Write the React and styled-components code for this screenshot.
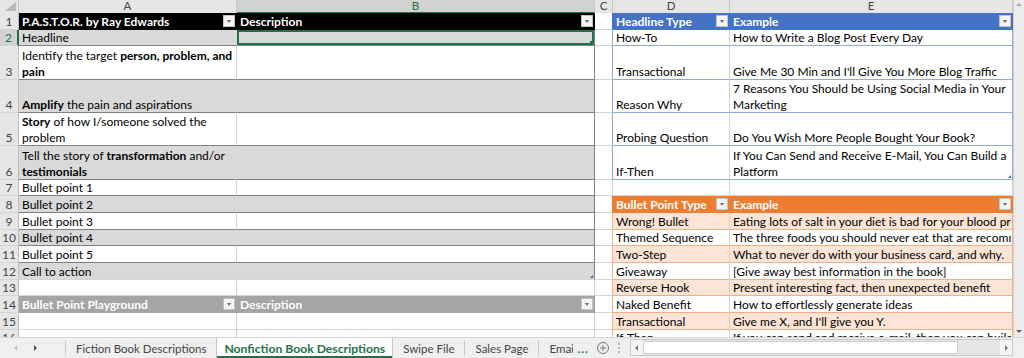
import React from 'react';
import styled, { createGlobalStyle } from 'styled-components';

const GlobalStyle = createGlobalStyle`
  html, body { margin: 0; padding: 0; background: #fff; }
  body { font-family: Lato, "Liberation Sans", sans-serif; }
`;

const COLS = '19px 218px 358px 18px 117px 283px';
const S = 16.67;
const D = 33.33;

const kinds = {
  plain: { bg: '#fff' },
  blackHead: { bg: '#000', fg: '#fff', bold: true, rc: '#000', bc: '#000' },
  band: { bg: '#d9d9d9', rc: '#d9d9d9', bc: '#808080' },
  bandLast: { bg: '#d9d9d9', rc: '#d9d9d9', bc: '#d4d4d4' },
  white: { bg: '#fff', bc: '#808080' },
  grayHead: { bg: '#a5a5a5', fg: '#fff', bold: true, rc: '#a5a5a5', bc: '#a5a5a5' },
  blueHead: { bg: '#4472c4', fg: '#fff', bold: true, rc: '#4472c4', bc: '#4472c4' },
  blue: { bg: '#fff', bc: '#8eaadb' },
  orangeHead: { bg: '#ed7d31', fg: '#fff', bold: true, rc: '#ed7d31', bc: '#ed7d31' },
  orange: { bg: '#fce4d6', rc: '#f8cbad', bc: '#f4b084' },
  orangeW: { bg: '#fff', bc: '#f4b084' },
};

const Window = styled.div`
  width: 1024px;
  height: 358px;
  display: flex;
  flex-direction: column;
  overflow: hidden;
  background: #fff;
`;

const SheetArea = styled.div`
  display: flex;
  height: 337px;
  overflow: hidden;
  flex: none;
`;

const Grid = styled.div`
  width: 1013px;
  display: flex;
  flex-direction: column;
  overflow: hidden;
`;

const Row = styled.div`
  display: grid;
  grid-template-columns: ${COLS};
  height: ${(p) => p.$h}px;
  flex: none;
`;

const Corner = styled.div`
  background: #e6e6e6;
  border-right: 1px solid #c6c6c6;
  border-bottom: 1px solid #bdbdbd;
  display: flex;
  align-items: flex-end;
  justify-content: flex-end;
  padding: 0 2px 2px 0;
  & svg { display: block; }
`;

const ColHead = styled.div`
  box-sizing: border-box;
  background: ${(p) => (p.$active ? '#d2d2d2' : '#e6e6e6')};
  color: ${(p) => (p.$active ? '#217346' : '#444')};
  border-right: 1px solid #c6c6c6;
  border-bottom: ${(p) => (p.$active ? '2px solid #217346' : '1px solid #bdbdbd')};
  font-size: 11.5px;
  line-height: 12px;
  text-align: center;
`;

const RowNum = styled.div`
  box-sizing: border-box;
  background: ${(p) => (p.$active ? '#d2d2d2' : '#e6e6e6')};
  color: ${(p) => (p.$active ? '#217346' : '#444')};
  border-right: ${(p) => (p.$active ? '2px solid #217346' : '1px solid #bdbdbd')};
  border-bottom: 1px solid #d4d4d4;
  font-size: 12px;
  line-height: 16px;
  display: flex;
  align-items: flex-end;
  justify-content: center;
  & span { margin-bottom: -1px; }
`;

const Cell = styled.div`
  box-sizing: border-box;
  position: relative;
  display: flex;
  align-items: flex-end;
  min-width: 0;
  overflow: hidden;
  white-space: nowrap;
  padding: 0 1px 0 3px;
  font-size: 12px;
  line-height: 16px;
  background: ${(p) => kinds[p.$kind].bg};
  color: ${(p) => kinds[p.$kind].fg || '#000'};
  font-weight: ${(p) => (kinds[p.$kind].bold ? 700 : 400)};
  border-right: 1px solid ${(p) => p.$rc || kinds[p.$kind].rc || '#d4d4d4'};
  border-bottom: 1px solid ${(p) => kinds[p.$kind].bc || '#d4d4d4'};
  box-shadow: ${(p) => (p.$sel ? 'inset 0 0 0 2px #217346' : 'none')};
  & b { font-weight: 700; }
`;

const Label = styled.span`
  flex: 1;
  min-width: 0;
  overflow: hidden;
  margin-bottom: -1px;
`;

const FilterBtn = styled.span`
  flex: none;
  position: relative;
  box-sizing: border-box;
  width: 12px;
  height: 12px;
  margin: 0 0 2px 2px;
  background: #f4f4f4;
  border: 1px solid #c3c3c3;
  &::after {
    content: '';
    position: absolute;
    left: 3px;
    top: 4px;
    border-left: 2.5px solid transparent;
    border-right: 2.5px solid transparent;
    border-top: 3px solid #6a6a6a;
  }
`;

const SelHandle = styled.span`
  position: absolute;
  right: 0;
  bottom: 0;
  width: 4px;
  height: 4px;
  background: #217346;
`;

const ResizeHandle = styled.span`
  position: absolute;
  right: 1px;
  bottom: 1px;
  width: 0;
  height: 0;
  border-left: 3px solid transparent;
  border-bottom: 3px solid #3b5fb7;
`;

const VScroll = styled.div`
  width: 11px;
  flex: none;
  background: #ececec;
  border-left: 1px solid #d2d2d2;
  box-sizing: border-box;
  display: flex;
  flex-direction: column;
  justify-content: space-between;
  align-items: center;
  padding: 3px 0 4px;
`;

const Arrow = styled.span`
  width: 0;
  height: 0;
  ${(p) =>
    p.$dir === 'up' &&
    `border-left: 3px solid transparent; border-right: 3px solid transparent; border-bottom: 3px solid ${p.$c};`}
  ${(p) =>
    p.$dir === 'down' &&
    `border-left: 3px solid transparent; border-right: 3px solid transparent; border-top: 3px solid ${p.$c};`}
  ${(p) =>
    p.$dir === 'left' &&
    `border-top: 3px solid transparent; border-bottom: 3px solid transparent; border-right: 3px solid ${p.$c};`}
  ${(p) =>
    p.$dir === 'right' &&
    `border-top: 3px solid transparent; border-bottom: 3px solid transparent; border-left: 3px solid ${p.$c};`}
`;

const TabBar = styled.div`
  flex: none;
  height: 21px;
  display: flex;
  align-items: stretch;
  background: #efefef;
  border-top: 1px solid #d6d6d6;
  box-sizing: border-box;
  font-size: 11.5px;
  color: #444;
`;

const Nav = styled.div`
  width: 65px;
  flex: none;
  display: flex;
  align-items: center;
  gap: 17px;
  padding-left: 14px;
  box-sizing: border-box;
`;

const Sep = styled.span`
  flex: none;
  width: 1px;
  height: 14px;
  align-self: center;
  background: #c6c6c6;
`;

const Tab = styled.div`
  flex: none;
  display: flex;
  align-items: center;
  padding: 0 ${(p) => (p.$active ? 7 : 10)}px;
  white-space: nowrap;
  overflow: hidden;
  ${(p) => p.$w && `width: ${p.$w}px; padding-right: 0;`}
  background: ${(p) => (p.$active ? '#fff' : 'transparent')};
  color: ${(p) => (p.$active ? '#217346' : '#444')};
  font-weight: ${(p) => (p.$active ? 700 : 400)};
  font-size: ${(p) => (p.$active ? 12.2 : 11.5)}px;
  border-left: ${(p) => (p.$active ? '1px solid #c6c6c6' : 'none')};
  border-right: ${(p) => (p.$active ? '1px solid #c6c6c6' : 'none')};
  box-shadow: ${(p) => (p.$active ? 'inset 0 -2px 0 #217346' : 'none')};
`;

const More = styled.span`
  flex: none;
  align-self: center;
  color: #217346;
  font-weight: 700;
  letter-spacing: 1px;
  margin-left: 4px;
`;

const AddBtn = styled.span`
  flex: none;
  align-self: center;
  width: 12px;
  height: 12px;
  margin-left: 8px;
  border: 1px solid #777;
  border-radius: 50%;
  position: relative;
  box-sizing: border-box;
  &::before,
  &::after {
    content: '';
    position: absolute;
    background: #777;
    left: 50%;
    top: 50%;
    transform: translate(-50%, -50%);
  }
  &::before { width: 6px; height: 1px; }
  &::after { width: 1px; height: 6px; }
`;

const Dots = styled.span`
  flex: none;
  align-self: center;
  margin: 0 10px 0 9px;
  display: flex;
  flex-direction: column;
  gap: 2px;
  & i {
    display: block;
    width: 2px;
    height: 2px;
    background: #b5b5b5;
  }
`;

const HScroll = styled.div`
  flex: 1;
  margin: 1px 11px 2px 0;
  display: flex;
  align-items: stretch;
  background: #e6e6e6;
  border: 1px solid #c8c8c8;
`;

const HBtn = styled.span`
  width: 12px;
  flex: none;
  display: flex;
  align-items: center;
  justify-content: center;
  background: #f4f4f4;
`;

const Thumb = styled.span`
  width: 313px;
  margin: 1px 0;
  background: #fff;
  border: 1px solid #cfcfcf;
`;

const Track = styled.span`
  flex: 1;
`;

const leftRows = [
  { n: 1, h: S, k: 'blackHead', a: 'P.A.S.T.O.R. by Ray Edwards', b: 'Description', f: true },
  { n: 2, h: S, k: 'band', a: 'Headline', sel: true },
  { n: 3, h: D, k: 'white', a: <>Identify the target <b>person, problem, and</b><br /><b>pain</b></> },
  { n: 4, h: D, k: 'band', a: <><b>Amplify</b> the pain and aspirations</> },
  { n: 5, h: D, k: 'white', a: <><b>Story</b> of how I/someone solved the<br />problem</> },
  { n: 6, h: D, k: 'band', a: <>Tell the story of <b>transformation</b> and/or<br /><b>testimonials</b></> },
  { n: 7, h: S, k: 'white', a: 'Bullet point 1' },
  { n: 8, h: S, k: 'band', a: 'Bullet point 2' },
  { n: 9, h: S, k: 'white', a: 'Bullet point 3' },
  { n: 10, h: S, k: 'band', a: 'Bullet point 4' },
  { n: 11, h: S, k: 'white', a: 'Bullet point 5' },
  { n: 12, h: S, k: 'bandLast', a: 'Call to action', end: true },
  { n: 13, h: S, k: 'plain' },
  { n: 14, h: S, k: 'grayHead', a: 'Bullet Point Playground', b: 'Description', f: true },
  { n: 15, h: S, k: 'plain' },
  { n: 16, h: S, k: 'plain' },
];

const rightRows = [
  { k: 'blueHead', d: 'Headline Type', e: 'Example', f: true, edge: '#4472c4' },
  { k: 'blue', d: 'How-To', e: 'How to Write a Blog Post Every Day', edge: '#8eaadb' },
  { k: 'blue', d: 'Transactional', e: "Give Me 30 Min and I'll Give You More Blog Traffic", edge: '#8eaadb' },
  { k: 'blue', d: 'Reason Why', e: <>7 Reasons You Should be Using Social Media in Your<br />Marketing</>, edge: '#8eaadb' },
  { k: 'blue', d: 'Probing Question', e: 'Do You Wish More People Bought Your Book?', edge: '#8eaadb' },
  { k: 'blue', d: 'If-Then', e: <>If You Can Send and Receive E-Mail, You Can Build a<br />Platform</>, edge: '#8eaadb', end: true },
  { k: 'plain' },
  { k: 'orangeHead', d: 'Bullet Point Type', e: 'Example', f: true, edge: '#ed7d31' },
  { k: 'orange', d: 'Wrong! Bullet', e: 'Eating lots of salt in your diet is bad for your blood pressure', edge: '#f4b084' },
  { k: 'orangeW', d: 'Themed Sequence', e: 'The three foods you should never eat that are recommended by doctors', edge: '#f4b084' },
  { k: 'orange', d: 'Two-Step', e: 'What to never do with your business card, and why.', edge: '#f4b084' },
  { k: 'orangeW', d: 'Giveaway', e: '[Give away best information in the book]', edge: '#f4b084' },
  { k: 'orange', d: 'Reverse Hook', e: 'Present interesting fact, then unexpected benefit', edge: '#f4b084' },
  { k: 'orangeW', d: 'Naked Benefit', e: 'How to effortlessly generate ideas', edge: '#f4b084' },
  { k: 'orange', d: 'Transactional', e: "Give me X, and I'll give you Y.", edge: '#f4b084' },
  { k: 'orangeW', d: 'If-Then', e: 'If you can send and receive e-mail, then you can build a platform', edge: '#f4b084' },
];

const inLeftTable = (n) => n >= 1 && n <= 12;

const SheetRow = ({ left, right }) => {
  const bEdge = inLeftTable(left.n) && left.n > 1 ? '#808080' : undefined;
  return (
    <Row $h={left.h}>
      <RowNum $active={left.sel}>
        <span>{left.n}</span>
      </RowNum>
      <Cell $kind={left.k}>
        <Label>{left.a}</Label>
        {left.f && <FilterBtn />}
      </Cell>
      <Cell $kind={left.k} $rc={bEdge} $sel={left.sel}>
        <Label>{left.b}</Label>
        {left.f && <FilterBtn />}
        {left.sel && <SelHandle />}
        {left.end && <ResizeHandle />}
      </Cell>
      <Cell $kind="plain" $rc={right.edge} />
      <Cell $kind={right.k}>
        <Label>{right.d}</Label>
        {right.f && <FilterBtn />}
      </Cell>
      <Cell $kind={right.k} $rc={right.edge}>
        <Label>{right.e}</Label>
        {right.f && <FilterBtn />}
        {right.end && <ResizeHandle />}
      </Cell>
    </Row>
  );
};

export default function App() {
  return (
    <Window>
      <GlobalStyle />
      <SheetArea>
        <Grid>
          <Row $h={13}>
            <Corner>
              <svg width="11" height="9" viewBox="0 0 11 9">
                <polygon points="11,0 11,9 0,9" fill="#b9b9b9" />
              </svg>
            </Corner>
            <ColHead>A</ColHead>
            <ColHead $active>B</ColHead>
            <ColHead>C</ColHead>
            <ColHead>D</ColHead>
            <ColHead>E</ColHead>
          </Row>
          {leftRows.map((l, i) => (
            <SheetRow key={l.n} left={l} right={rightRows[i]} />
          ))}
        </Grid>
        <VScroll>
          <Arrow $dir="up" $c="#a8a8a8" />
          <Arrow $dir="down" $c="#606060" />
        </VScroll>
      </SheetArea>
      <TabBar>
        <Nav>
          <Arrow $dir="left" $c="#c2c2c2" />
          <Arrow $dir="right" $c="#505050" />
        </Nav>
        <Sep />
        <Tab>Fiction Book Descriptions</Tab>
        <Tab $active>Nonfiction Book Descriptions</Tab>
        <Tab>Swipe File</Tab>
        <Sep />
        <Tab>Sales Page</Tab>
        <Sep />
        <Tab $w={24}>Email Sequences</Tab>
        <More>...</More>
        <AddBtn />
        <Dots>
          <i />
          <i />
          <i />
        </Dots>
        <HScroll>
          <HBtn>
            <Arrow $dir="left" $c="#777" />
          </HBtn>
          <Thumb />
          <Track />
          <HBtn>
            <Arrow $dir="right" $c="#777" />
          </HBtn>
        </HScroll>
      </TabBar>
    </Window>
  );
}
